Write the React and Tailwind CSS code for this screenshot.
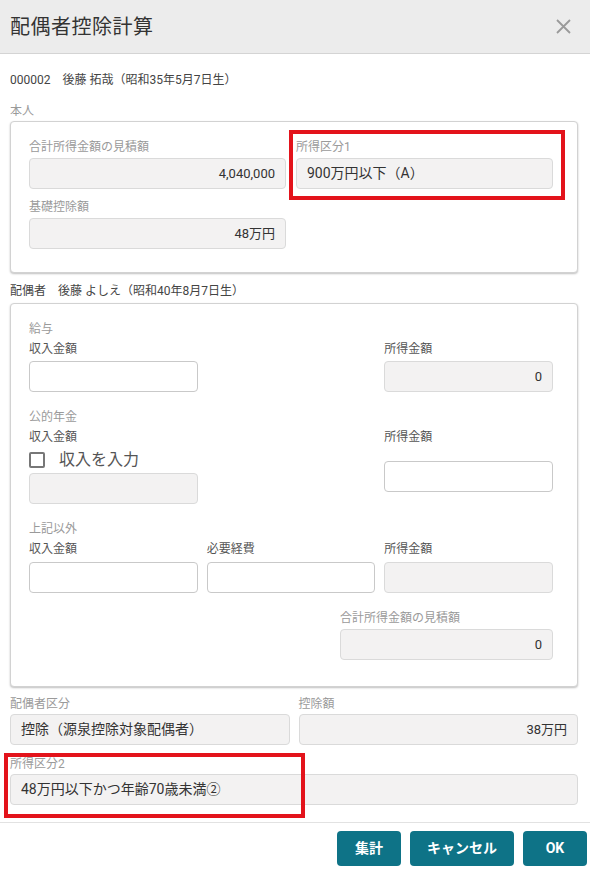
// SpouseDeductionDialog.jsx — 配偶者控除計算 dialog
import React from 'react';

const FONT = { fontFamily: 'Roboto, "Noto Sans CJK JP", sans-serif' };

function Label({ children, dim }) {
  return (
    <div className={`text-[12px] leading-[20px] whitespace-nowrap ${dim ? 'text-[#9a9a9a]' : 'text-[#555]'}`}>
      {children}
    </div>
  );
}

function Field({ value, disabled, right, className = '' }) {
  return (
    <div
      className={`h-[31px] rounded-[4px] border px-[10px] flex items-center text-[13px] text-[#333] whitespace-nowrap ${
        disabled ? 'bg-[#f3f2f2] border-[#dadada]' : 'bg-white border-[#c9c9c9]'
      } ${right ? 'justify-end' : 'justify-start'} ${className}`}
    >
      {value}
    </div>
  );
}

function Panel({ children, className = '' }) {
  return (
    <div className={`rounded-[4px] border border-[#d2d2d2] bg-white shadow-[0_1px_2px_rgba(0,0,0,0.25)] ${className}`}>
      {children}
    </div>
  );
}

function Highlight({ className }) {
  return <div className={`absolute border-[4px] border-[#e3131b] pointer-events-none ${className}`} />;
}

export default function App() {
  return (
    <div className="w-[590px] h-[870px] bg-white overflow-hidden" style={FONT}>
      {/* Header */}
      <div className="h-[54px] bg-[#ececec] border-b border-[#d4d4d4] flex items-center justify-between pl-[10px] pr-[19px]">
        <h1 className="text-[20px] text-[#333] font-normal tracking-[0.5px]">配偶者控除計算</h1>
        <svg width="15" height="15" viewBox="0 0 15 15" className="text-[#9a9a9a]">
          <path d="M1 1 L14 14 M14 1 L1 14" stroke="currentColor" strokeWidth="1.8" />
        </svg>
      </div>

      <div className="pl-[10px] pr-[12px]">
        <div className="mt-[16px] text-[12px] leading-[20px] text-[#444]">
          000002　後藤 拓哉（昭和35年5月7日生）
        </div>
        <div className="mt-[11px]">
          <Label dim>本人</Label>
        </div>

        {/* 本人 panel */}
        <Panel className="relative pl-[18px] pr-[24px] pt-[15px] pb-[23px]">
          <div className="grid grid-cols-2 gap-x-[10px]">
            <div>
              <Label dim>合計所得金額の見積額</Label>
              <Field disabled right value="4,040,000" className="mt-[1px]" />
            </div>
            <div className="relative">
              <Label dim>所得区分1</Label>
              <Field disabled value="900万円以下（A）" className="mt-[1px] text-[14px]" />
              <Highlight className="left-[-7px] right-[-12px] top-[-7px] bottom-[-11px]" />
            </div>
            <div className="mt-[8px]">
              <Label dim>基礎控除額</Label>
              <Field disabled right value="48万円" className="mt-[1px]" />
            </div>
          </div>
        </Panel>

        <div className="mt-[8px] text-[12px] leading-[20px] text-[#444]">
          配偶者　後藤 よしえ（昭和40年8月7日生）
        </div>

        {/* 配偶者 panel */}
        <Panel className="mt-[2px] pl-[18px] pr-[24px] pt-[15px] pb-[26px]">
          {/* 給与 */}
          <Label dim>給与</Label>
          <div className="grid grid-cols-3 gap-x-[9px]">
            <div>
              <Label>収入金額</Label>
              <Field className="mt-[2px]" />
            </div>
            <div />
            <div>
              <Label>所得金額</Label>
              <Field disabled right value="0" className="mt-[2px]" />
            </div>
          </div>

          {/* 公的年金 */}
          <div className="mt-[15px]">
            <Label dim>公的年金</Label>
          </div>
          <div className="grid grid-cols-3 gap-x-[9px]">
            <div>
              <Label>収入金額</Label>
              <div className="h-[26px] flex items-center gap-[14px]">
                <span className="w-[16px] h-[16px] border-2 border-[#777] rounded-[2px] bg-white" />
                <span className="text-[16px] text-[#555] leading-none">収入を入力</span>
              </div>
              <Field disabled />
            </div>
            <div />
            <div>
              <Label>所得金額</Label>
              <Field className="mt-[14px]" />
            </div>
          </div>

          {/* 上記以外 */}
          <div className="mt-[15px]">
            <Label dim>上記以外</Label>
          </div>
          <div className="grid grid-cols-3 gap-x-[9px]">
            <div>
              <Label>収入金額</Label>
              <Field className="mt-[3px]" />
            </div>
            <div>
              <Label>必要経費</Label>
              <Field className="mt-[3px]" />
            </div>
            <div>
              <Label>所得金額</Label>
              <Field disabled className="mt-[3px]" />
            </div>
          </div>

          <div className="mt-[15px] ml-auto w-[213px]">
            <Label dim>合計所得金額の見積額</Label>
            <Field disabled right value="0" className="mt-[1px]" />
          </div>
        </Panel>

        {/* 配偶者区分 / 控除額 */}
        <div className="mt-[7px] grid grid-cols-2 gap-x-[9px]">
          <div>
            <Label dim>配偶者区分</Label>
            <Field disabled value="控除（源泉控除対象配偶者）" className="text-[14px]" />
          </div>
          <div>
            <Label dim>控除額</Label>
            <Field disabled right value="38万円" />
          </div>
        </div>

        <div className="relative mt-[9px]">
          <Label dim>所得区分2</Label>
          <Field disabled value="48万円以下かつ年齢70歳未満②" className="text-[14px]" />
          <Highlight className="left-[-6px] w-[301px] top-[-1px] bottom-[-13px]" />
        </div>
      </div>

      {/* Footer */}
      <div className="mt-[17px] border-t border-[#e2e2e2] flex justify-end gap-[9px] pr-[3px] pt-[8px]">
        <button className="h-[35px] w-[64px] rounded-[4px] bg-[#0e7387] text-white text-[14px] font-bold">集計</button>
        <button className="h-[35px] w-[104px] rounded-[4px] bg-[#0e7387] text-white text-[14px] font-bold">キャンセル</button>
        <button className="h-[35px] w-[64px] rounded-[4px] bg-[#0e7387] text-white text-[14px] font-bold">OK</button>
      </div>
    </div>
  );
}
